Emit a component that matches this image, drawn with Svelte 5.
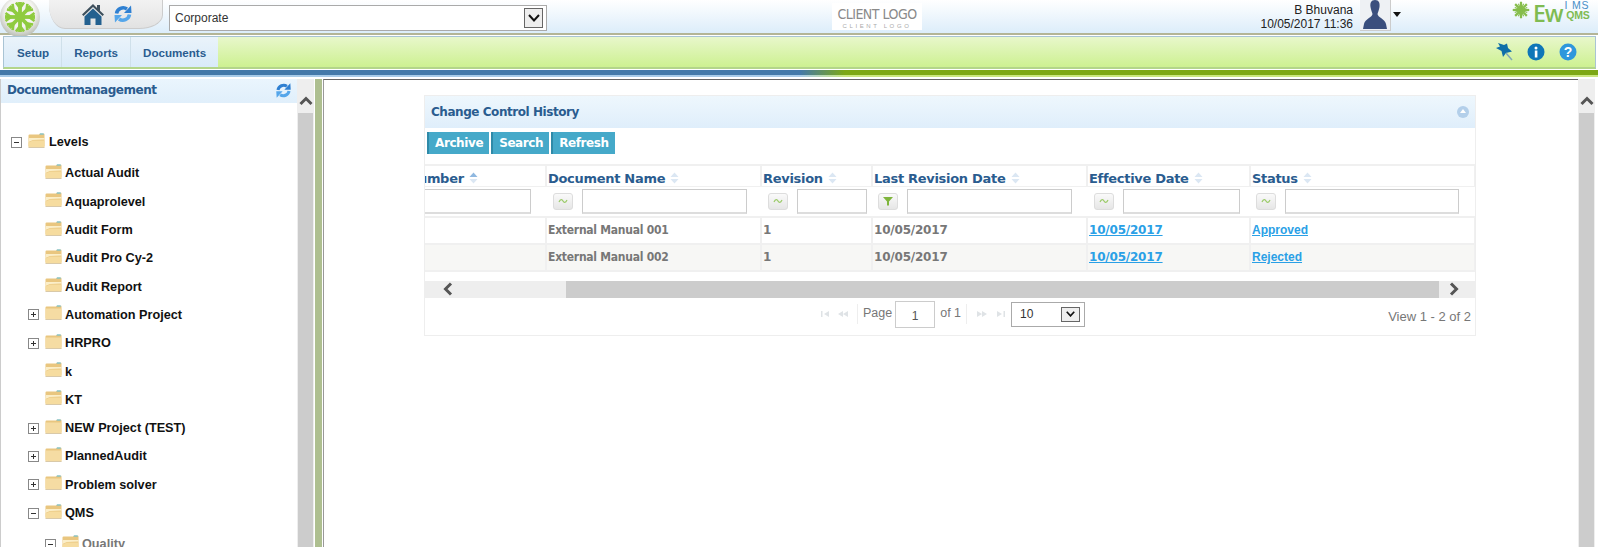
<script>
  const tree = [
    { label: 'Levels', level: 0, toggle: 'minus', open: true },
    { label: 'Actual Audit', level: 1, open: true, first: true },
    { label: 'Aquaprolevel', level: 1, open: true },
    { label: 'Audit Form', level: 1, open: true },
    { label: 'Audit Pro Cy-2', level: 1, open: true },
    { label: 'Audit Report', level: 1, open: true },
    { label: 'Automation Project', level: 1, toggle: 'plus' },
    { label: 'HRPRO', level: 1, toggle: 'plus' },
    { label: 'k', level: 1, open: true },
    { label: 'KT', level: 1, open: true },
    { label: 'NEW Project (TEST)', level: 1, toggle: 'plus' },
    { label: 'PlannedAudit', level: 1, toggle: 'plus' },
    { label: 'Problem solver', level: 1, toggle: 'plus' },
    { label: 'QMS', level: 1, toggle: 'minus', open: true },
    { label: 'Quality', level: 2, toggle: 'minus', open: true, muted: true, first: true }
  ];

  const columns = [
    { name: 'Document Number', width: 217, inputWidth: 200, pad: 14, sort: 'asc' },
    { name: 'Document Name', width: 215, inputWidth: 165, pad: 13 },
    { name: 'Revision', width: 111, inputWidth: 70, pad: 4 },
    { name: 'Last Revision Date', width: 215, inputWidth: 165, pad: 14, filter: true },
    { name: 'Effective Date', width: 163, inputWidth: 117, pad: 9 },
    { name: 'Status', width: 225, inputWidth: 174, pad: 15 }
  ];

  const rows = [
    { name: 'External Manual 001', rev: '1', last: '10/05/2017', eff: '10/05/2017', status: 'Approved' },
    { name: 'External Manual 002', rev: '1', last: '10/05/2017', eff: '10/05/2017', status: 'Rejected' }
  ];

  const spokes = [0, 45, 90, 135, 180, 225, 270, 315];
</script>

{#snippet refresh(size)}
  <svg width={size} height={size} viewBox="0 0 20 20">
    <path d="M3.500 9.500A6.800 6.800 0 0 1 14 5" fill="none" stroke="#2f80d2" stroke-width="3.600" />
    <path d="M11 9 18.500 9 18 1.500Z" fill="#2f80d2" />
    <path d="M16.500 10.500A6.800 6.800 0 0 1 6 15" fill="none" stroke="#55a6ea" stroke-width="3.600" />
    <path d="M9 11 1.500 11 2 18.500Z" fill="#55a6ea" />
  </svg>
{/snippet}

{#snippet sortArrows(active)}
  <svg class="sort" width="9" height="12" viewBox="0 0 9 12">
    <path d="M4.500 0.500 8.500 5H0.500Z" fill={active ? '#8fb8e0' : '#dbe7f3'} />
    <path d="M4.500 11.500 8.500 7H0.500Z" fill="#dbe7f3" />
  </svg>
{/snippet}

{#snippet folder(open)}
  <svg class="folder" width="17" height="16" viewBox="0 0 17 16">
    <path d="M0.500 2.500Q0.500 1.500 1.500 1.500H11L12 0.500H15.500Q16.500 0.500 16.500 1.500V13.500H0.500Z" fill="#e9c67f" />
    <path d="M12 0.500H15.500L16 1.500H11.500Z" fill="#58bfe6" />
    {#if open}
      <path d="M1 5H16.500V6.500L5 7 0.500 9Z" fill="#fbeec8" />
      <path d="M0.500 9.500 5 7.500H16.500V13.500Q16.500 14.500 15.500 14.500H1.500Q0.500 14.500 0.500 13.500Z" fill="#f6dc9f" />
    {:else}
      <path d="M0.500 3.500H16.500V14Q16.500 15 15.500 15H1.500Q0.500 15 0.500 14Z" fill="#f5dca3" />
    {/if}
    <path d="M0.500 14H16.500V15H0.500Z" fill="#d9c9a8" />
  </svg>
{/snippet}

{#snippet pagerArrows(kind)}
  <svg class="arrows {kind}" width="12" height="8" viewBox="0 0 12 8" fill="#dfe3e6">
    {#if kind === 'first'}
      <path d="M1 1H2.500V7H1ZM9 1V7L4 4Z" />
    {:else if kind === 'prev'}
      <path d="M6 1V7L1 4ZM11 1V7L6 4Z" />
    {:else if kind === 'next'}
      <path d="M1 1V7L6 4ZM6 1V7L11 4Z" />
    {:else}
      <path d="M3 1V7L8 4ZM9.500 1H11V7H9.500Z" />
    {/if}
  </svg>
{/snippet}

{#snippet chevron(dir)}
  <svg width="14" height="12" viewBox="0 0 14 12" class="chev {dir}">
    <path d="M1.500 9 7 3.500 12.500 9" fill="none" stroke="#555" stroke-width="3" />
  </svg>
{/snippet}

<div class="page">
  <header class="top">
    <div class="logo">
      <svg width="42" height="36" viewBox="0 0 42 36">
        <defs>
          <radialGradient id="disc" cx="0.5" cy="0.4" r="0.6">
            <stop offset="0.6" stop-color="#f4f4f0" />
            <stop offset="1" stop-color="#b9bdb4" />
          </radialGradient>
        </defs>
        <circle cx="20" cy="17" r="20" fill="url(#disc)" />
        {#each spokes as a}
          <g transform="rotate({a} 20 17)" stroke="#8fcb3f" fill="none">
            <path d="M20 17V2" stroke-width="3.800" />
            <path d="M20 8 16 2.500M20 8 24 2.500" stroke-width="2.600" />
          </g>
        {/each}
        <circle cx="20" cy="17" r="5" fill="#8fcb3f" />
      </svg>
    </div>
    <div class="home-tab">
      <svg width="24" height="24" viewBox="0 0 24 24">
        <path d="M12 2 1 12.500 2.500 14 12 5 21.500 14 23 12.500 19 8.700V3H16V6Z" fill="#3d4f5c" />
        <path d="M12 6.500 3.500 14.500V23H9.500V16.500H14.500V23H20.500V14.500Z" fill="#23608f" />
      </svg>
      {@render refresh(20)}
    </div>
    <div class="select corporate">
      <span>Corporate</span>
      <span class="select-btn"><svg width="12" height="8" viewBox="0 0 12 8"><path d="M1 1 6 6.500 11 1" fill="none" stroke="#111" stroke-width="2" /></svg></span>
    </div>
    <div class="client-logo">
      <span class="cl-main">CLIENT LOGO</span>
      <span class="cl-sub">CLIENT LOGO</span>
    </div>
    <div class="user">
      <div class="user-text">
        <div>B Bhuvana</div>
        <div>10/05/2017 11:36</div>
      </div>
      <div class="avatar">
        <svg width="30" height="30" viewBox="0 0 30 30">
          <path d="M15 0C11 0 10 3 10.500 7 11 10 12 12 12.500 14 12.500 17 5 19 4 24L3 29H27L26 24C25 19 17.500 17 17.500 14 18 12 19 10 19.500 7 20 3 19 0 15 0Z" fill="#3b4f7d" />
        </svg>
      </div>
      <span class="caret"></span>
    </div>
    <div class="brand">
      <svg width="18" height="18" viewBox="0 0 24 24">
        {#each spokes as a}
          <path d="M12 12V1" transform="rotate({a} 12 12)" stroke="#86bd4b" stroke-width="3" />
          <path d="M12 12V3" transform="rotate({a + 22.500} 12 12)" stroke="#86bd4b" stroke-width="1.500" />
        {/each}
      </svg>
      <span class="ew">Ew</span>
      <span class="qms"><b>I MS</b><i>QMS</i></span>
    </div>
  </header>

  <nav class="menu">
    <div class="tab">Setup</div>
    <div class="tab">Reports</div>
    <div class="tab">Documents</div>
    <div class="menu-icons">
      <svg width="18" height="20" viewBox="0 0 18 20">
        <path d="M3 1 9 3 12 1.500 13 6 17 9.500 11 11 8 15 6.500 9 1 6 5 4.500Z" fill="#0f6fa8" />
        <path d="M11 11 17 18" stroke="#7fa8b8" stroke-width="1.500" />
      </svg>
      <svg width="18" height="18" viewBox="0 0 18 18">
        <circle cx="9" cy="9" r="8.500" fill="#0f76b8" />
        <rect x="7.800" y="7.500" width="2.600" height="7" fill="#fff" />
        <circle cx="9" cy="5" r="1.500" fill="#fff" />
      </svg>
      <svg width="18" height="18" viewBox="0 0 18 18">
        <circle cx="9" cy="9" r="8.500" fill="#2f97dc" />
        <text x="9" y="14" class="help">?</text>
      </svg>
    </div>
  </nav>
  <div class="stripe"></div>

  <div class="body">
    <aside class="side">
      <div class="side-head">
        <span>Documentmanagement</span>
        {@render refresh(17)}
      </div>
      <ul class="tree">
        {#each tree as node}
          <li class="node lvl{node.level}" class:muted={node.muted} class:first={node.first}>
            <span class="toggle">
              {#if node.toggle}
                <span class="box">
                  <span class="h"></span>
                  {#if node.toggle === 'plus'}<span class="v"></span>{/if}
                </span>
              {/if}
            </span>
            {@render folder(node.open)}
            <span class="label">{node.label}</span>
          </li>
        {/each}
      </ul>
    </aside>
    <div class="vbar">
      <div class="vbar-top">{@render chevron('up')}</div>
      <div class="vbar-thumb"></div>
    </div>
    <div class="split"></div>

    <main class="content">
      <section class="panel">
        <div class="panel-head">
          <span>Change Control History</span>
          <span class="collapse"></span>
        </div>
        <div class="actions">
          <button>Archive</button>
          <button>Search</button>
          <button>Refresh</button>
        </div>
        <div class="grid-wrap">
          <table class="grid">
            <colgroup>
              {#each columns as c}<col style="width: {c.width}px" />{/each}
            </colgroup>
            <thead>
              <tr class="heads">
                {#each columns as c}
                  <th>{c.name} {@render sortArrows(c.sort === 'asc')}</th>
                {/each}
              </tr>
              <tr class="filters">
                {#each columns as c, i}
                  <td>
                    <div class="filter" style="padding-right: {c.pad}px">
                      {#if i > 0}
                        <span class="op">
                          {#if c.filter}
                            <svg width="10" height="10" viewBox="0 0 10 10"><path d="M0 1H10L6 5.500V9.500H4V5.500Z" fill="#7fb53c" /></svg>
                          {:else}
                            <svg width="10" height="6" viewBox="0 0 10 6"><path d="M1 4C2.500 1 4 1 5 3S7.500 5 9 2" fill="none" stroke="#9ccb6b" stroke-width="1.300" /></svg>
                          {/if}
                        </span>
                      {/if}
                      <input type="text" style="width: {c.inputWidth}px" />
                    </div>
                  </td>
                {/each}
              </tr>
            </thead>
            <tbody>
              {#each rows as r, i}
                <tr class:alt={i === 1}>
                  <td></td>
                  <td class="name">{r.name}</td>
                  <td>{r.rev}</td>
                  <td>{r.last}</td>
                  <td><a href="#eff">{r.eff}</a></td>
                  <td class="status"><a href="#status">{r.status}</a></td>
                </tr>
              {/each}
            </tbody>
          </table>
        </div>
        <div class="hbar">
          <div class="hbar-end left">{@render chevron('left')}</div>
          <div class="hbar-thumb"></div>
          <div class="hbar-end right">{@render chevron('right')}</div>
        </div>
        <div class="pager">
          <div class="pager-mid">
            {@render pagerArrows('first')}
            {@render pagerArrows('prev')}
            <span class="sep before"></span>
            <span class="ptext">Page</span>
            <span class="page-input">1</span>
            <span class="ptext">of 1</span>
            <span class="sep"></span>
            {@render pagerArrows('next')}
            {@render pagerArrows('last')}
            <div class="select per-page">
              <span>10</span>
              <span class="select-btn"><svg width="9" height="6" viewBox="0 0 12 8"><path d="M1 1 6 6.500 11 1" fill="none" stroke="#111" stroke-width="2.200" /></svg></span>
            </div>
          </div>
          <span class="view">View 1 - 2 of 2</span>
        </div>
      </section>
    </main>

    <div class="vbar main-bar">
      <div class="vbar-top">{@render chevron('up')}</div>
      <div class="vbar-thumb"></div>
    </div>
  </div>
</div>

<style>
  :global(body) {
    margin: 0;
    background: #fff;
  }

  .page {
    height: 547px;
    overflow: hidden;
    display: flex;
    flex-direction: column;
    font-family: "Liberation Sans", Arial, sans-serif;
    font-size: 12px;
    color: #222;
  }

  /* top strip */
  .top {
    height: 33px;
    flex: none;
    display: flex;
    align-items: flex-start;
    background: linear-gradient(#fff, #dcedfa);
    border-bottom: 2px solid #b3b596;
    box-sizing: content-box;
  }

  .logo {
    width: 42px;
    height: 36px;
    flex: none;
    position: relative;
    z-index: 2;
  }

  .home-tab {
    width: 114px;
    height: 29px;
    margin-left: 7px;
    flex: none;
    display: flex;
    align-items: center;
    gap: 8px;
    padding-left: 32px;
    box-sizing: border-box;
    background: linear-gradient(#f2f2f2, #e2e2e2);
    border-radius: 0 0 24px 16px / 0 0 14px 24px;
    border-bottom: 1px solid #ccc;
    border-right: 1px solid #ccc;
  }

  .select {
    display: flex;
    align-items: center;
    justify-content: space-between;
    box-sizing: border-box;
    background: #fff;
    border: 1px solid #aaa;
  }

  .select-btn {
    display: flex;
    align-items: center;
    justify-content: center;
    box-sizing: border-box;
    background: #eee;
    border: 1px solid #666;
  }

  .corporate {
    width: 378px;
    height: 26px;
    margin: 5px 0 0 6px;
    padding: 0 3px 0 5px;
    font-size: 12px;
    color: #333;
  }

  .corporate .select-btn {
    width: 19px;
    height: 20px;
  }

  .client-logo {
    width: 90px;
    height: 27px;
    margin: 3px 0 0 285px;
    background: #fff;
    display: flex;
    flex-direction: column;
    align-items: center;
    color: #8a8a8a;
    flex: none;
  }

  .cl-main {
    font-family: "DejaVu Sans Condensed", "DejaVu Sans", sans-serif;
    font-size: 14px;
    line-height: 17px;
    margin-top: 3px;
    letter-spacing: -0.500px;
  }

  .cl-sub {
    font-size: 6px;
    line-height: 6px;
    letter-spacing: 2.600px;
    color: #aaa;
  }

  .user {
    display: flex;
    align-items: flex-start;
    margin-left: auto;
  }

  .user-text {
    text-align: right;
    line-height: 14px;
    margin-top: 3px;
    color: #222;
  }

  .avatar {
    width: 30px;
    height: 30px;
    margin-left: 7px;
    background: #eef1f4;
    border-right: 1px solid #ccc;
    border-bottom: 1px solid #ccc;
  }

  .caret {
    width: 0;
    height: 0;
    margin: 12px 0 0 2px;
    border: 4px solid transparent;
    border-top: 5px solid #111;
    border-bottom: 0;
  }

  .brand {
    display: flex;
    align-items: flex-start;
    width: 86px;
    margin-left: 111px;
    color: #7fbb52;
  }

  .brand svg {
    margin-top: 1px;
    flex: none;
  }

  .ew {
    font-family: "Open Sans", "Liberation Sans", sans-serif;
    font-weight: 600;
    font-size: 23px;
    line-height: 26px;
    margin-left: 3px;
    letter-spacing: -1px;
    white-space: nowrap;
  }

  .qms {
    display: flex;
    flex-direction: column;
    align-items: flex-end;
    font-size: 10.500px;
    line-height: 10px;
    margin-left: 2px;
    white-space: nowrap;
  }

  .qms b {
    font-weight: normal;
    color: #4a8fc8;
    letter-spacing: 0.800px;
  }

  .qms i {
    font-style: normal;
    font-weight: bold;
    letter-spacing: -0.300px;
  }

  /* menu bar */
  .menu {
    height: 33px;
    margin: 1px 2px 0 3px;
    flex: none;
    box-sizing: border-box;
    display: flex;
    align-items: stretch;
    border: 1px solid #a9c4d4;
    border-bottom: 2px solid #b3d58a;
    background: linear-gradient(#e8f7cb, #cdf191);
  }

  .tab {
    display: flex;
    align-items: center;
    padding: 0 12px 0 13px;
    font-weight: bold;
    font-size: 11.600px;
    color: #2a5c8f;
    background: linear-gradient(#eaf3fa, #d9ebf9);
    border-right: 1px solid #cfe0ea;
  }

  .tab:nth-child(2) {
    padding: 0 12px;
  }

  .tab:nth-child(3) {
    padding: 0 12px;
    border-right: 0;
  }

  .menu-icons {
    margin-left: auto;
    display: flex;
    align-items: center;
    gap: 14px;
    padding-right: 18px;
  }

  .help {
    fill: #fff;
    font-size: 14px;
    font-weight: bold;
    text-anchor: middle;
  }

  .stripe {
    height: 7px;
    flex: none;
    margin-top: 1px;
    background:
      linear-gradient(90deg, #4479a9 0, #4479a9 800px, #7da815 845px, #7da815 100%) top / 100% 5px no-repeat,
      linear-gradient(90deg, #a8cbe8 0, #a8cbe8 800px, #cbe77f 845px, #cbe77f 100%) bottom / 100% 2px no-repeat;
  }

  /* body */
  .body {
    flex: 1;
    min-height: 0;
    display: flex;
    margin-top: 2px;
  }

  .side {
    width: 297px;
    flex: none;
    overflow: hidden;
    border-left: 1px solid #ccc;
    box-sizing: border-box;
  }

  .side-head {
    height: 24px;
    display: flex;
    align-items: center;
    justify-content: space-between;
    padding: 0 5px 2px 6px;
    box-sizing: border-box;
    background: linear-gradient(#eaf5fd, #e0effb);
    color: #2a5c8f;
    font-family: "DejaVu Sans", sans-serif;
    font-weight: bold;
    font-size: 12px;
    letter-spacing: -0.450px;
  }

  .tree {
    list-style: none;
    margin: 0;
    padding: 25px 0 0;
  }

  .node {
    height: 28.300px;
    display: flex;
    align-items: center;
    font-weight: bold;
    font-size: 12.700px;
    color: #111;
  }

  .node.first {
    margin-top: 3px;
  }

  .node.muted {
    color: #777;
  }

  .toggle {
    width: 17px;
    flex: none;
    display: flex;
  }

  .lvl0 {
    padding-left: 10px;
  }

  .lvl1 {
    padding-left: 27px;
  }

  .lvl2 {
    padding-left: 44px;
  }

  .box {
    position: relative;
    width: 9px;
    height: 9px;
    border: 1px solid #888;
    background: #fff;
  }

  .h {
    position: absolute;
    left: 2px;
    top: 4px;
    width: 5px;
    height: 1px;
    background: #333;
  }

  .v {
    position: absolute;
    left: 4px;
    top: 2px;
    width: 1px;
    height: 5px;
    background: #333;
  }

  .folder {
    flex: none;
    margin-top: -3px;
  }

  .label {
    margin-left: 3px;
  }

  .lvl0 .label {
    margin-left: 4px;
  }

  .vbar {
    width: 17px;
    flex: none;
    display: flex;
    flex-direction: column;
    background: #eee;
  }

  .vbar-top {
    height: 34px;
    display: flex;
    align-items: flex-end;
    justify-content: center;
    padding-bottom: 6px;
    box-sizing: border-box;
  }

  .vbar-thumb {
    flex: 1;
    background: #ccc;
    margin: 0 1px;
  }

  .split {
    width: 7px;
    flex: none;
    margin-left: 1px;
    background: #aebf90;
    border-right: 1px solid #fff;
  }

  .content {
    flex: 1;
    min-width: 0;
    border-left: 1px solid #999;
    border-top: 1px solid #666;
    padding: 15px 0 0 100px;
    box-sizing: border-box;
  }

  .main-bar {
    width: 17px;
    margin-right: 3px;
  }

  .panel {
    width: 1052px;
    box-sizing: border-box;
    border: 1px solid #eee;
  }

  .panel-head {
    height: 32px;
    display: flex;
    align-items: center;
    justify-content: space-between;
    padding: 0 6px;
    background: linear-gradient(#eef7fd, #dfeefb);
    color: #2a5c8f;
    font-weight: bold;
    font-family: "DejaVu Sans", sans-serif;
    font-size: 12px;
    letter-spacing: -0.450px;
  }

  .collapse {
    width: 12px;
    height: 12px;
    border-radius: 50%;
    background: #b3cfea;
    position: relative;
  }

  .collapse::after {
    content: "";
    position: absolute;
    left: 3px;
    top: 3px;
    border: 3px solid transparent;
    border-top: 0;
    border-bottom: 4px solid #fff;
  }

  .actions {
    display: flex;
    gap: 2px;
    padding: 4px 0 0 2px;
    height: 36px;
    box-sizing: border-box;
    align-items: flex-start;
  }

  .actions button {
    height: 22px;
    padding: 0 6px 0 6px;
    border: 0;
    border-left: 2px solid #2f8aa8;
    background: #45a9c9;
    color: #fff;
    font-family: "DejaVu Sans", sans-serif;
    font-size: 12px;
    font-weight: bold;
    letter-spacing: -0.400px;
  }

  .grid-wrap {
    overflow: hidden;
  }

  .grid {
    table-layout: fixed;
    width: 1146px;
    margin-left: -97px;
    border-collapse: collapse;
    font-family: "DejaVu Sans", sans-serif;
  }

  .grid th,
  .grid td {
    border: 2px solid #f0f0f0;
    padding: 0 1px;
    box-sizing: border-box;
    text-align: left;
    white-space: nowrap;
    overflow: hidden;
  }

  .heads th {
    height: 21px;
    padding-top: 5px;
    color: #2a5c8f;
    font-size: 13px;
    font-weight: bold;
    letter-spacing: -0.300px;
    border-bottom-width: 1px;
  }

  .sort {
    vertical-align: -1px;
    margin-left: 1px;
  }

  .grid .filters td {
    height: 30px;
    padding: 0;
    border-top-width: 1px;
    border-left: 2px solid #fff;
    border-right: 2px solid #fff;
  }

  .filter {
    display: flex;
    align-items: center;
    justify-content: flex-end;
    gap: 9px;
  }

  .op {
    width: 20px;
    height: 17px;
    flex: none;
    box-sizing: border-box;
    display: flex;
    align-items: center;
    justify-content: center;
    background: linear-gradient(#fafafa, #e6e6e6);
    border: 1px solid #ddd;
    border-radius: 3px;
  }

  input {
    height: 25px;
    flex: none;
    box-sizing: border-box;
    background: #fff;
    border: 1px solid #ccc;
    border-bottom: 2px solid #ddd;
    padding: 0;
  }

  tbody td {
    height: 27px;
    font-size: 12px;
    font-weight: bold;
    color: #777;
    letter-spacing: -0.200px;
  }

  tbody td.name {
    font-family: "DejaVu Sans Condensed", "DejaVu Sans", sans-serif;
    letter-spacing: -0.250px;
  }

  tbody tr.alt td {
    background: #f7f7f5;
  }

  tbody a {
    color: #2aa0e6;
  }

  tbody td.status a {
    font-family: "Liberation Sans", Arial, sans-serif;
    letter-spacing: 0;
  }

  .hbar {
    height: 17px;
    margin-top: 9px;
    display: flex;
    background: #eee;
  }

  .hbar-end {
    display: flex;
    align-items: center;
    flex: none;
  }

  .hbar-end.left {
    width: 141px;
    padding-left: 16px;
    box-sizing: border-box;
  }

  .hbar-end.right {
    width: 36px;
    padding-left: 8px;
    box-sizing: border-box;
  }

  .hbar-thumb {
    flex: 1;
    background: #ccc;
  }

  .chev {
    display: block;
  }

  .chev.left {
    transform: rotate(-90deg);
  }

  .chev.right {
    transform: rotate(90deg);
  }

  .pager {
    height: 37px;
    position: relative;
    display: flex;
    align-items: center;
    justify-content: flex-end;
    padding-right: 4px;
    color: #777;
  }

  .pager-mid {
    position: absolute;
    left: 395px;
    top: 3px;
    display: flex;
    align-items: center;
    gap: 5px;
    height: 27px;
  }

  .sep {
    width: 1px;
    height: 20px;
    background: #eee;
  }

  .sep.before {
    margin-left: 3px;
  }

  .ptext {
    font-size: 12.500px;
    margin-top: -3px;
  }

  .page-input {
    width: 40px;
    height: 27px;
    margin-left: -2px;
    box-sizing: border-box;
    border: 1px solid #ccc;
    text-align: center;
    line-height: 29px;
    color: #555;
  }

  .arrows.next {
    margin-left: 4px;
  }

  .arrows.last {
    margin-left: 1px;
  }

  .per-page {
    width: 74px;
    height: 25px;
    padding: 0 4px 0 8px;
    color: #333;
  }

  .per-page .select-btn {
    width: 19px;
    height: 15px;
  }

  .view {
    font-size: 13px;
    color: #777;
  }
</style>
